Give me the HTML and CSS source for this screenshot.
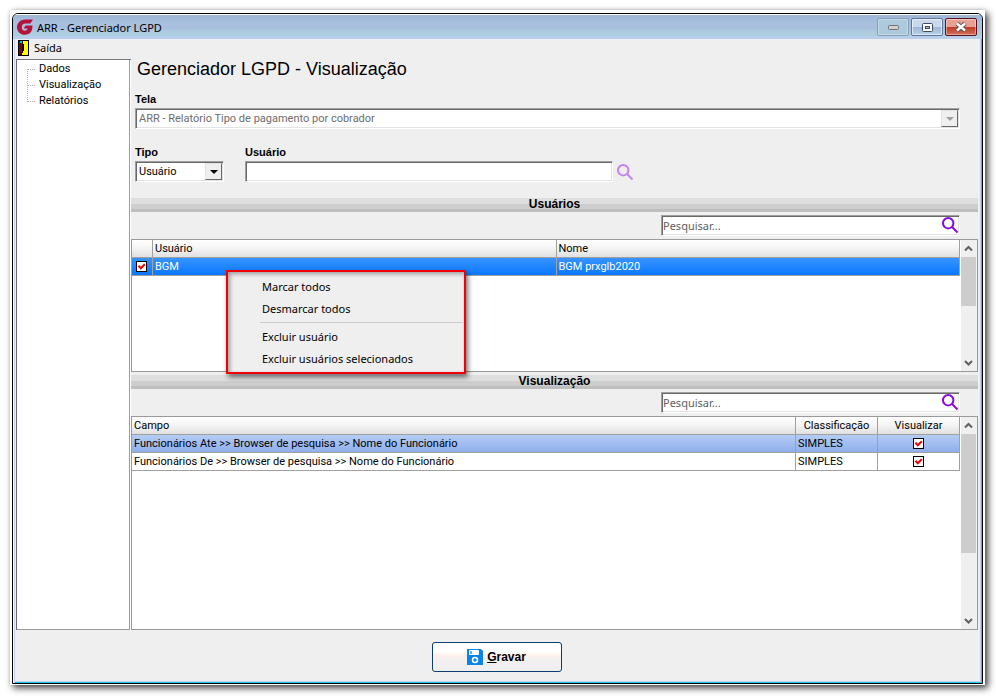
FILE: index.html
```html
<!DOCTYPE html>
<html lang="pt-BR">
<head>
  <meta charset="UTF-8" />
  <meta name="viewport" content="width=device-width, initial-scale=1.0" />
  <title>ARR - Gerenciador LGPD</title>
  <link rel="stylesheet" href="styles.css">
</head>
<body>
  <div class="frame">
    <div class="window">
      <header class="titlebar">
        <svg class="logo" viewBox="0 0 16 16" aria-hidden="true">
          <path d="M16 0.4 H8.2 C3.4 0.4 0 4 0 8.2 C0 12.6 3.4 15.8 7.8 15.8 C12 15.8 15 13.4 15.4 8.6 V6.4 H8.6 L6.6 9.6 H10.6 C10 11.2 9.2 11.8 7.8 11.8 C5.8 11.8 4.8 10.4 4.8 8.2 C4.8 6 6.2 4.6 8.4 4.6 H13.4 Z" fill="#b5123e" />
        </svg>
        <span class="caption">ARR - Gerenciador LGPD</span>
        <button class="win-btn minimize" aria-label="Minimizar">
          <svg width="11" height="5" viewBox="0 0 11 5"><rect x="0.5" y="0.5" width="10" height="4" rx="1" fill="#d4d0c8" stroke="#6b7480" /></svg>
        </button>
        <button class="win-btn" aria-label="Maximizar">
          <svg width="11" height="9" viewBox="0 0 11 9"><rect x="0.5" y="0.5" width="10" height="8" rx="1" fill="#fff" stroke="#3f4a62" /><rect x="3.5" y="3.5" width="4" height="2" fill="#a9c0e2" stroke="#3f4a62" /></svg>
        </button>
        <button class="win-btn close" aria-label="Fechar">
          <svg width="12" height="10" viewBox="0 0 12 10"><path d="M2 1.5 L10 8.5 M10 1.5 L2 8.5" stroke="#4d4a5e" stroke-width="4.4" /><path d="M2 1.5 L10 8.5 M10 1.5 L2 8.5" stroke="#fff" stroke-width="2.6" /></svg>
        </button>
      </header>

      <nav class="menubar">
        <button class="menu-btn">
          <svg width="11" height="16" viewBox="0 0 11 16" aria-hidden="true">
            <rect width="11" height="16" fill="#000" />
            <rect x="4" y="1" width="6" height="14" fill="#ff0" />
            <path d="M1 2 H4 L5 4 V12 L3 14 L1 15 Z" fill="#800000" />
            <rect x="2" y="1" width="2" height="2" fill="#0cc" />
            <path d="M4 1 H5 V4 H6 V11 H5 V13 H4 Z" fill="#000" />
          </svg>
          Saída
        </button>
      </nav>

      <div class="content">
        <aside class="tree">
          <ul>
            <li><a href="#dados">Dados</a></li>
            <li><a href="#visualizacao">Visualização</a></li>
            <li><a href="#relatorios">Relatórios</a></li>
          </ul>
        </aside>

        <main class="main">
          <form class="form">
            <h1>Gerenciador LGPD - Visualização</h1>
            <div class="field">
              <label for="tela">Tela</label>
              <div class="combo disabled">
                <select id="tela" disabled>
                  <option>ARR - Relatório Tipo de pagamento por cobrador</option>
                </select>
                <span class="combo-arrow"></span>
              </div>
            </div>
            <div class="form-row">
              <div class="field tipo">
                <label for="tipo">Tipo</label>
                <div class="combo">
                  <select id="tipo">
                    <option>Usuário</option>
                  </select>
                  <span class="combo-arrow"></span>
                </div>
              </div>
              <div class="field usuario">
                <label for="usuario">Usuário</label>
                <input type="text" id="usuario">
              </div>
              <button type="button" class="lookup" aria-label="Buscar usuário">
                <svg width="17" height="17" viewBox="0 0 17 17"><circle cx="6.2" cy="6.2" r="5.2" fill="none" stroke="#c583f2" stroke-width="2" /><path d="M10 10 L15.5 15.5" stroke="#c583f2" stroke-width="2" /></svg>
              </button>
            </div>
          </form>

          <h2 class="strip">Usuários</h2>
          <div class="toolbar">
            <div class="search">
              <input type="text" placeholder="Pesquisar..." aria-label="Pesquisar usuários">
              <button type="button" aria-label="Pesquisar">
                <svg width="17" height="17" viewBox="0 0 17 17"><circle cx="6.2" cy="6.2" r="5.2" fill="none" stroke="#8a0be0" stroke-width="2" /><path d="M10 10 L15.5 15.5" stroke="#8a0be0" stroke-width="2" /></svg>
              </button>
            </div>
          </div>
          <section class="grid users">
            <div class="grid-body">
              <table>
                <colgroup><col class="col-mark"><col><col></colgroup>
                <thead>
                  <tr><th></th><th>Usuário</th><th>Nome</th></tr>
                </thead>
                <tbody>
                  <tr class="active">
                    <td class="mark"><input type="checkbox" aria-label="Marcar BGM" checked></td>
                    <td>BGM</td>
                    <td>BGM prxglb2020</td>
                  </tr>
                </tbody>
              </table>
            </div>
            <div class="scrollbar">
              <svg width="9" height="17" viewBox="0 0 9 17"><path d="M1 10.5 L4.5 7 L8 10.5" fill="none" stroke="#606060" stroke-width="2" /></svg>
              <div class="thumb"></div>
              <svg width="9" height="17" viewBox="0 0 9 17"><path d="M1 7 L4.5 10.5 L8 7" fill="none" stroke="#606060" stroke-width="2" /></svg>
            </div>
            <menu class="context-menu">
              <li><button>Marcar todos</button></li>
              <li><button>Desmarcar todos</button></li>
              <li class="separator"></li>
              <li><button>Excluir usuário</button></li>
              <li><button>Excluir usuários selecionados</button></li>
            </menu>
          </section>

          <h2 class="strip">Visualização</h2>
          <div class="toolbar">
            <div class="search">
              <input type="text" placeholder="Pesquisar..." aria-label="Pesquisar campos">
              <button type="button" aria-label="Pesquisar">
                <svg width="17" height="17" viewBox="0 0 17 17"><circle cx="6.2" cy="6.2" r="5.2" fill="none" stroke="#8a0be0" stroke-width="2" /><path d="M10 10 L15.5 15.5" stroke="#8a0be0" stroke-width="2" /></svg>
              </button>
            </div>
          </div>
          <section class="grid fields">
            <div class="grid-body">
              <table>
                <colgroup><col><col class="col-side"><col class="col-side"></colgroup>
                <thead>
                  <tr><th>Campo</th><th class="center">Classificação</th><th class="center">Visualizar</th></tr>
                </thead>
                <tbody>
                  <tr class="selected">
                    <td>Funcionários Ate &gt;&gt; Browser de pesquisa &gt;&gt; Nome do Funcionário</td>
                    <td>SIMPLES</td>
                    <td class="center"><input type="checkbox" aria-label="Visualizar Funcionários Ate" checked></td>
                  </tr>
                  <tr>
                    <td>Funcionários De &gt;&gt; Browser de pesquisa &gt;&gt; Nome do Funcionário</td>
                    <td>SIMPLES</td>
                    <td class="center"><input type="checkbox" aria-label="Visualizar Funcionários De" checked></td>
                  </tr>
                </tbody>
              </table>
            </div>
            <div class="scrollbar">
              <svg width="9" height="17" viewBox="0 0 9 17"><path d="M1 10.5 L4.5 7 L8 10.5" fill="none" stroke="#606060" stroke-width="2" /></svg>
              <div class="thumb"></div>
              <svg width="9" height="17" viewBox="0 0 9 17"><path d="M1 7 L4.5 10.5 L8 7" fill="none" stroke="#606060" stroke-width="2" /></svg>
            </div>
          </section>
        </main>
      </div>

      <footer class="footer">
        <button class="save-btn">
          <svg width="16" height="16" viewBox="0 0 16 16" aria-hidden="true">
            <path d="M0 0 H14 L16 2 V16 H0 Z" fill="#0b84e8" />
            <rect x="2" y="1" width="10" height="5" rx="1" fill="#fff" />
            <rect x="3" y="2" width="2" height="3" fill="#5db2f5" />
            <circle cx="8" cy="11" r="2.5" fill="none" stroke="#fff" stroke-width="1.5" />
          </svg>
          <span><u>G</u>ravar</span>
        </button>
      </footer>
    </div>
  </div>
</body>
</html>
```
FILE: styles.css
```css
* {
  box-sizing: border-box;
}
body {
  margin: 0;
  height: 100vh;
  padding: 10px 11px 11px 10px;
  background: #fff;
  color: #000;
  font-family: Roboto, "Liberation Sans", sans-serif;
  font-size: 11px;
  line-height: 16px;
}
button, input, select {
  font: inherit;
  color: inherit;
  margin: 0;
  padding: 0;
  border: none;
  background: none;
}
h1, h2, label, .save-btn {
  font-family: "Liberation Sans", Arial, sans-serif;
}
.frame {
  height: 100%;
  padding: 3px 2px 1px 2px;
  background: #fff;
  box-shadow: 3px 3px 7px rgba(0, 0, 0, 0.75), 0 0 3px rgba(0, 0, 0, 0.15);
}
.window {
  height: 100%;
  display: flex;
  flex-direction: column;
  border: 1px solid #000;
  border-radius: 6px 6px 0 0;
  background: #efefef;
  box-shadow: inset 1px 0 #fff, inset 2px 0 #c5cdee, inset -1px -1px #1fcbe8, inset -2px -2px #c5cdee;
}

/* title bar */
.titlebar {
  flex: none;
  height: 25px;
  display: flex;
  align-items: flex-start;
  gap: 2px;
  padding: 4px 5px 0 4px;
  border-radius: 5px 5px 0 0;
  background: linear-gradient(#fff 0 1px, #9fb5d6 1px, #a9c3de 11px, #a9bbdc 12px, #adcbe0 18px, #adcfdf 22px, #b9cdec 23px);
}
.logo {
  width: 16px;
  height: 16px;
  margin-top: 1px;
}
.caption {
  flex: 1;
  padding-left: 2px;
  font-family: "Noto Sans", sans-serif;
  font-size: 11px;
  line-height: 20px;
}
.win-btn {
  width: 32px;
  height: 18px;
  display: flex;
  align-items: center;
  justify-content: center;
  border: 1px solid #5f7597;
  border-radius: 2px;
  background: linear-gradient(#c9d8ec 0 8px, #9fb4d6 8px, #b4d2e6 16px);
  box-shadow: inset 0 0 0 1px rgba(255, 255, 255, 0.6);
}
.win-btn.minimize {
  border-color: #84a0b8;
  background: #adcadd;
  box-shadow: inset 0 0 0 1px rgba(255, 255, 255, 0.3);
}
.win-btn.close {
  border-color: #571420;
  background: linear-gradient(#e9a093 0 8px, #c03a20 8px, #d0705c 16px);
  box-shadow: inset 0 0 0 1px rgba(255, 255, 255, 0.4);
}

/* menu bar */
.menubar {
  flex: none;
  height: 20px;
  padding-left: 5px;
}
.menu-btn {
  display: flex;
  align-items: center;
  gap: 5px;
  height: 18px;
  font-family: "Noto Sans", sans-serif;
}

.content {
  flex: 1;
  min-height: 0;
  display: flex;
  padding: 0 4px 0 3px;
}
.tree {
  flex: none;
  width: 115px;
  padding: 1px 0 0 10px;
  background: #fff;
  border-top: 1px solid #777;
  border-left: 1px solid #6a6a6a;
  box-shadow: inset -1px 0 #fff, inset -2px -1px #9c9c9c;
}
.tree ul {
  margin: 0;
  padding: 0;
  list-style: none;
  background: repeating-linear-gradient(#b8b8b8 0 1px, #fff 1px 2px) 0 8px / 1px 33px no-repeat;
}
.tree li {
  display: flex;
  align-items: center;
  gap: 4px;
  height: 16px;
}
.tree li::before {
  content: "";
  width: 8px;
  border-top: 1px dotted #b0b0b0;
}
.tree li a {
  color: #000;
  text-decoration: none;
}

.main {
  flex: 1;
  min-width: 0;
  display: flex;
  flex-direction: column;
}
.form {
  display: flex;
  flex-direction: column;
  padding: 0 18px 16px 4px;
}
h1 {
  margin: 0 0 12px 2px;
  font-size: 18px;
  line-height: 20px;
  font-weight: normal;
}
.field {
  display: flex;
  flex-direction: column;
  gap: 1px;
}
.field label {
  font-weight: bold;
}
.form-row {
  display: flex;
  align-items: flex-end;
  margin-top: 15px;
}
.tipo {
  width: 89px;
  margin-right: 21px;
}
.usuario {
  flex: 0 1 368px;
}
.combo, .field input, .search {
  height: 21px;
  background: #fff;
  border: 1px solid;
  border-color: #a0a0a0 #fff #fff #a0a0a0;
  box-shadow: inset 1px 1px #696969, inset -1px -1px #e3e3e3;
}
.combo {
  display: flex;
  padding: 1px;
}
.combo select {
  flex: 1;
  min-width: 0;
  appearance: none;
  padding-left: 2px;
}
.combo select:disabled {
  color: #6d6d6d;
  opacity: 1;
}
.combo-arrow {
  width: 17px;
  display: flex;
  align-items: center;
  justify-content: center;
  background: #efefef;
  border: 1px solid;
  border-color: #e3e3e3 #696969 #696969 #e3e3e3;
}
.combo-arrow::before {
  content: "";
  border: 4px solid transparent;
  border-top-color: #000;
  border-bottom: none;
}
.combo.disabled .combo-arrow::before {
  border-top-color: #a0a0a0;
}
.field input {
  padding: 0 4px;
}
.lookup {
  display: flex;
  margin: 0 0 1px 4px;
}

/* section strips */
.strip {
  flex: none;
  margin: 0;
  height: 14px;
  font-size: 12px;
  line-height: 13px;
  font-weight: bold;
  text-align: center;
  background: linear-gradient(#dedede 0 6px, #cecece 6px 11px, #bebebe 11px);
}
.toolbar {
  flex: none;
  display: flex;
  justify-content: flex-end;
  padding: 3px 18px 3px 0;
}
.search {
  width: 299px;
  display: flex;
  align-items: flex-start;
}
.search input {
  flex: 1;
  min-width: 0;
  height: 18px;
  padding-left: 1px;
  font-family: "Noto Sans", sans-serif;
}
.search input::placeholder {
  color: #606060;
  opacity: 1;
}
.search button {
  display: flex;
  padding-top: 1px;
}

/* data grids */
.grid {
  position: relative;
  display: flex;
  background: #fff;
  border: 1px solid #9a9a9a;
}
.users {
  flex: none;
  height: 133px;
  margin-bottom: 3px;
}
.fields {
  flex: 1;
  min-height: 0;
}
.grid-body {
  flex: 1;
  min-width: 0;
}
table {
  width: 100%;
  table-layout: fixed;
  border-collapse: separate;
  border-spacing: 0;
}
.col-mark {
  width: 21px;
}
.col-side {
  width: 82px;
}
th, td {
  height: 18px;
  padding: 0 2px;
  line-height: 17px;
  font-weight: normal;
  text-align: left;
  white-space: nowrap;
  border-right: 1px solid #a0a0a0;
  border-bottom: 1px solid #a0a0a0;
}
th {
  background: linear-gradient(#fff, #f4f4f4 50%, #e0e0e0);
}
.center {
  text-align: center;
}
.mark {
  padding: 0 4px;
}
.active td {
  color: #fff;
  background: linear-gradient(#3794ff, #0a78ff);
}
.selected td {
  background: linear-gradient(#b4cdf4, #90aeec);
}
td input {
  display: block;
  appearance: none;
  width: 11px;
  height: 11px;
  border: 1px solid #000;
  background: #fff url("data:image/svg+xml,%3Csvg xmlns='http://www.w3.org/2000/svg' viewBox='0 0 9 9'%3E%3Cpath d='M1.5 3.8L3.8 6.3L7.8 2.2' fill='none' stroke='%23f00000' stroke-width='2'/%3E%3C/svg%3E");
}
.center input {
  margin: 0 auto;
}
.scrollbar {
  flex: none;
  width: 17px;
  display: flex;
  flex-direction: column;
  align-items: center;
  padding-right: 1px;
  background: #efefef;
  border-left: 1px solid #fff;
}
.scrollbar svg {
  flex: none;
}
.thumb {
  width: 15px;
  height: 49px;
  margin-bottom: auto;
  background: #cdcdcd;
}
.fields .thumb {
  height: 119px;
}

.context-menu {
  position: absolute;
  top: 30px;
  left: 94px;
  width: 240px;
  margin: 0;
  padding: 4px 1px 2px 32px;
  list-style: none;
  background: #efefef;
  border: 2px solid #f00000;
  box-shadow: 2px 3px 5px rgba(0, 0, 0, 0.55), inset 2px 2px 4px rgba(0, 0, 0, 0.35);
  font-family: "Noto Sans", sans-serif;
}
.context-menu button {
  width: 100%;
  height: 22px;
  padding-left: 2px;
  text-align: left;
}
.context-menu li {
  height: 22px;
}
.context-menu .separator {
  height: 6px;
  padding-top: 2px;
}
.context-menu .separator::before {
  content: "";
  display: block;
  border-top: 1px solid #cbcbcb;
}

.footer {
  flex: none;
  display: flex;
  justify-content: center;
  padding: 12px 2px 11px 0;
}
.save-btn {
  width: 130px;
  height: 30px;
  display: flex;
  align-items: center;
  justify-content: center;
  gap: 4px;
  border: 1px solid #0a3f70;
  border-radius: 3px;
  background: linear-gradient(#fff 30%, #fffaf0 38%, #ffeeea 45%, #f4f0f0 55%, #efefef);
  font-size: 12px;
  font-weight: bold;
}
```
